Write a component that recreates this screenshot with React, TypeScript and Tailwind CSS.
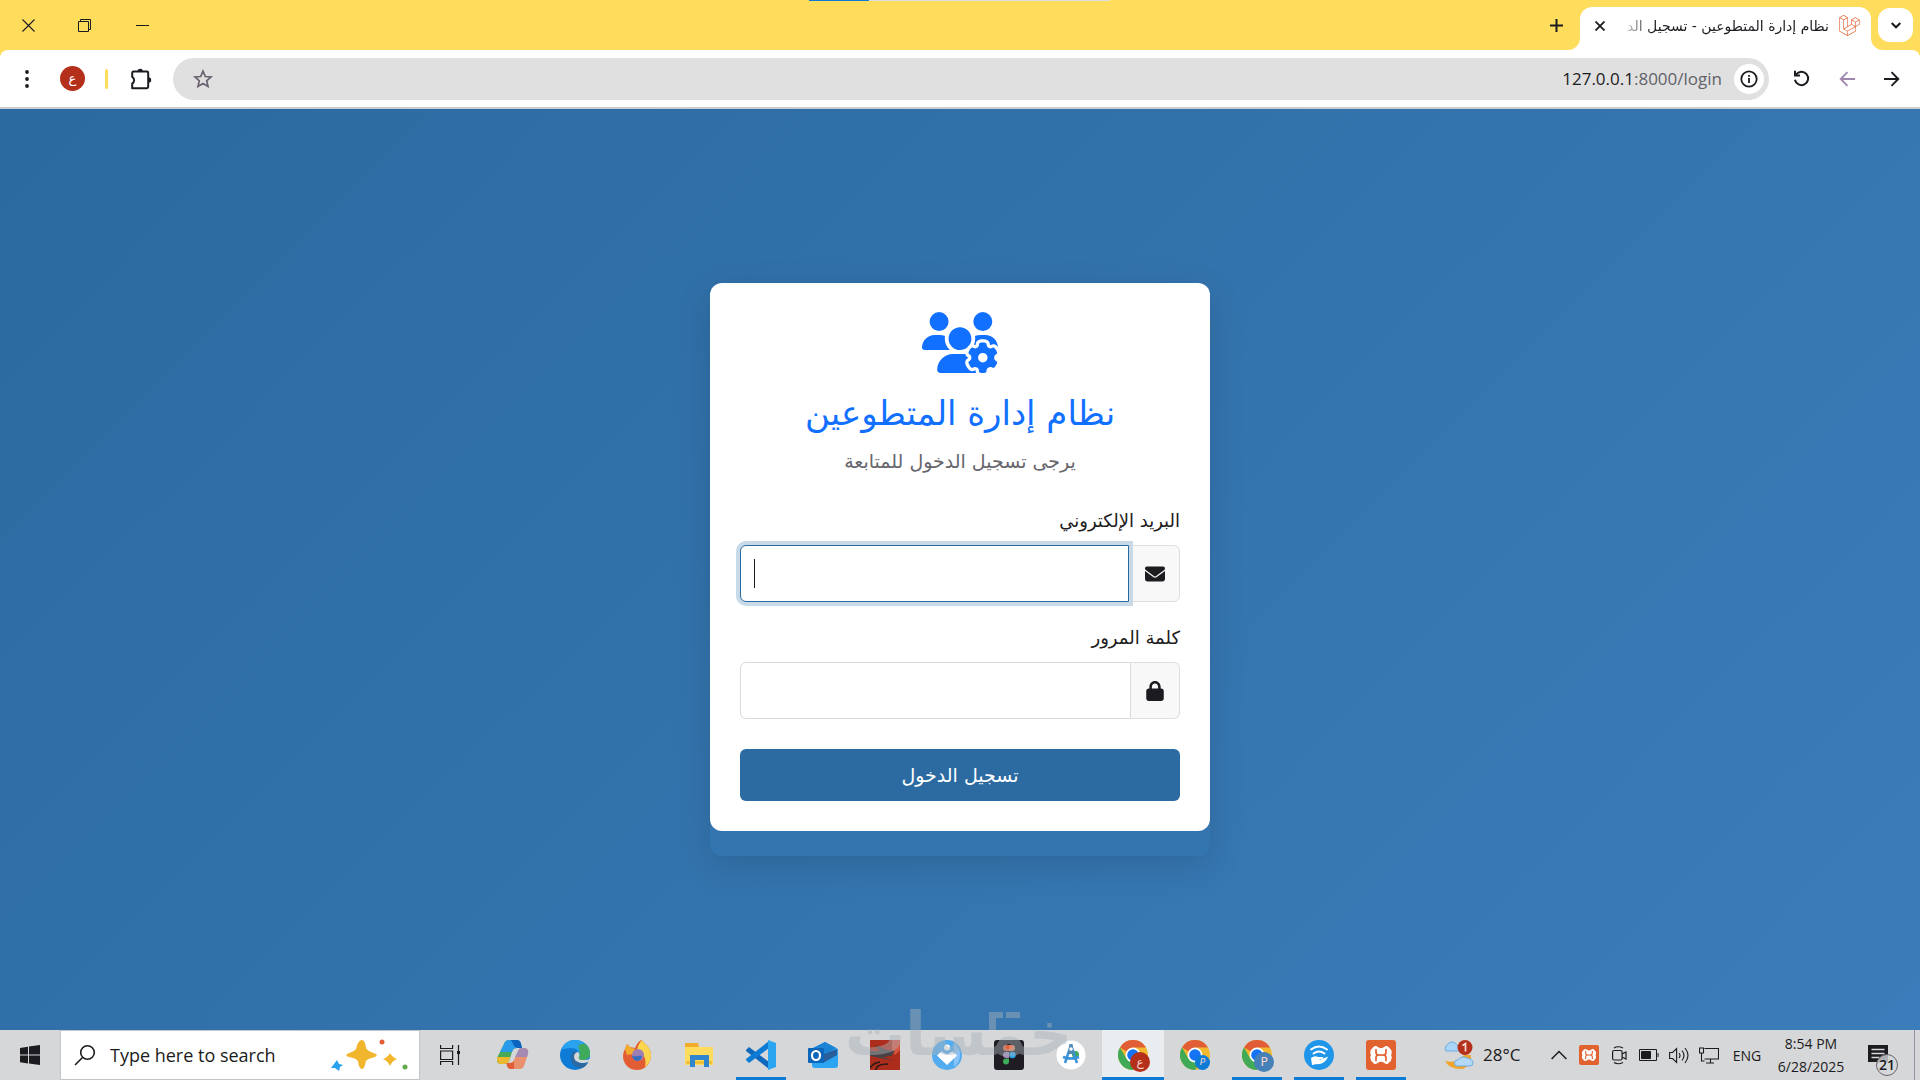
import React from "react";
import { FaUsersGear, FaEnvelope, FaLock, FaLaravel } from "react-icons/fa6";

const arabic = "font-['DejaVu_Sans',sans-serif]";

function CloseGlyph() {
  return (
    <svg width="13" height="13" viewBox="0 0 13 13" stroke="#1c1b20" strokeWidth="1.1" fill="none">
      <path d="M0.5 0.5l12 12M12.5 0.5l-12 12" />
    </svg>
  );
}
function RestoreGlyph() {
  return (
    <svg width="13" height="13" viewBox="0 0 13 13" stroke="#1c1b20" fill="none">
      <path d="M0.5 2.5h10v10h-10zM2.5 2.5v-2h10v10h-2" />
    </svg>
  );
}

function TitleBar() {
  return (
    <header className="relative flex h-[50px] items-center bg-[#ffdd5c]">
      <div className="absolute left-[809px] top-0 flex h-px w-[301px] bg-[#dedede]">
        <span className="h-px w-[60px] bg-[#0c7bd6]" />
      </div>
      <button aria-label="Close window" className="flex h-full w-14 items-center justify-center">
        <CloseGlyph />
      </button>
      <button aria-label="Restore window" className="flex h-full w-14 items-center justify-center">
        <RestoreGlyph />
      </button>
      <button aria-label="Minimize window" className="flex h-full w-15 items-center justify-center">
        <span className="h-px w-[13px] bg-[#1c1b20]" />
      </button>
      <div className="flex-1" />
      <button aria-label="New tab" className="mr-3 flex size-6 items-center justify-center">
        <svg width="13" height="13" viewBox="0 0 13 13" stroke="#1c1b20" strokeWidth="2" fill="none">
          <path d="M6.5 0v13M0 6.5h13" />
        </svg>
      </button>
      <div className="relative mr-[7px] flex h-[43px] w-[291px] items-center self-end rounded-t-xl bg-white pb-[6px] pl-[14px] pr-[11px]">
        <svg className="absolute -left-3 bottom-0" width="12" height="12" viewBox="0 0 12 12" fill="#fff">
          <path d="M12 0v12H0A12 12 0 0 0 12 0z" />
        </svg>
        <svg className="absolute -right-3 bottom-0" width="12" height="12" viewBox="0 0 12 12" fill="#fff">
          <path d="M0 0v12h12A12 12 0 0 1 0 0z" />
        </svg>
        <button aria-label="Close tab" className="flex w-[11px] items-center justify-center">
          <svg width="10" height="10" viewBox="0 0 10 10" stroke="#1c1b20" strokeWidth="1.8" fill="none">
            <path d="M0.5 0.5l9 9M9.5 0.5l-9 9" />
          </svg>
        </button>
        <div
          dir="rtl"
          className={`ml-3 mr-[10px] flex-1 whitespace-nowrap text-[14px] leading-6 text-[#1c1b20] [mask-image:linear-gradient(to_right,transparent_2px,black_36px)] ${arabic}`}
        >
          نظام إدارة المتطوعين - تسجيل الد
        </div>
        <FaLaravel className="size-[21px] text-[#e2683c]" />
      </div>
      <button aria-label="Search tabs" className="mr-[7px] flex h-[34px] w-[35px] items-center justify-center rounded-xl bg-white">
        <svg width="10" height="7" viewBox="0 0 10 7" stroke="#1c1b20" strokeWidth="2" fill="none">
          <path d="M0.7 1l4.3 4.3L9.3 1" />
        </svg>
      </button>
    </header>
  );
}

function Toolbar() {
  return (
    <div className="bg-[#ffdd5c]">
      <div className="flex h-[59px] items-center rounded-t-lg border-b-2 border-[#cbcccd] bg-white pl-[15px] pr-5">
        <button aria-label="Browser menu" className="flex w-6 justify-center">
          <svg width="4" height="18" viewBox="0 0 4 18" fill="#1c1b20">
            <circle cx="2" cy="2" r="1.9" />
            <circle cx="2" cy="9" r="1.9" />
            <circle cx="2" cy="16" r="1.9" />
          </svg>
        </button>
        <button
          aria-label="Profile"
          className={`ml-[21px] flex size-[25px] items-center justify-center rounded-full bg-[#b5301a] text-[13px] leading-none text-white ${arabic}`}
        >
          ع
        </button>
        <span className="ml-5 h-5 w-[3px] rounded-full bg-[#ffdd5c]" />
        <button aria-label="Extensions" className="ml-[22px] flex size-6 items-center">
          <svg width="22" height="22" viewBox="0 0 22 22" fill="none">
            <path d="M2.2 5a1.4 1.4 0 0 1 1.4-1.4h13.200a1.400 1.400 0 0 1 1.400 1.400v13.800a1.400 1.400 0 0 1-1.400 1.400H2.200v-4.600a4 4 0 0 0 0-6.800z" stroke="#1c1b20" strokeWidth="2" strokeLinejoin="round" />
            <path d="M7.500 3.500a2.700 2.700 0 0 1 5.400 0zM18.500 9.200a2.700 2.700 0 0 1 0 5.400z" fill="#1c1b20" />
          </svg>
        </button>
        <div className="ml-[19px] flex h-[42px] flex-1 items-center rounded-full bg-[#e0e0e0] pl-[20px] pr-[5px]">
          <button aria-label="Bookmark this tab">
            <svg width="20" height="19" viewBox="0 0 20 19" fill="none" stroke="#6b6270" strokeWidth="1.700">
              <path d="M10 2.200l2.300 5.300 5.700.5-4.300 3.800 1.300 5.600-5-3-5 3 1.300-5.600L2 8l5.700-.5z" />
            </svg>
          </button>
          <input aria-label="Address" readOnly tabIndex={-1} className="w-0 flex-1 bg-transparent" />
          <a href="#login" className="font-['Open_Sans',sans-serif] text-[17px] leading-6 text-[#5f6268]">
            <span className="text-[#1c1b20]">127.0.0.1</span>:8000/login
          </a>
          <button aria-label="Site information" className="ml-3 flex size-[30px] items-center justify-center rounded-full bg-white">
            <svg width="18" height="18" viewBox="0 0 18 18" fill="none" stroke="#1c1b20" strokeWidth="1.800">
              <circle cx="9" cy="9" r="7.700" />
              <path d="M9 8v5M9 5v1.800" />
            </svg>
          </button>
        </div>
        <button aria-label="Reload" className="ml-[24px]">
          <svg width="17" height="17" viewBox="0 0 17 17" fill="none" stroke="#1c1b20" strokeWidth="2">
            <path d="M3 4.500a6.700 6.700 0 1 1-1.100 5.300M2 .8v4.700h5" />
          </svg>
        </button>
        <button aria-label="Forward" disabled className="ml-[29px]">
          <svg width="16" height="16" viewBox="0 0 16 16" fill="none" stroke="#9f86ae" strokeWidth="1.800">
            <path d="M16 8H2M8.500 1.200L1.700 8l6.800 6.800" />
          </svg>
        </button>
        <button aria-label="Back" className="ml-[29px]">
          <svg width="16" height="16" viewBox="0 0 16 16" fill="none" stroke="#1c1b20" strokeWidth="1.900">
            <path d="M0 8h14M7.500 1.200L14.300 8l-6.800 6.800" />
          </svg>
        </button>
      </div>
    </div>
  );
}

function LoginCard() {
  return (
    <div dir="rtl" className={`w-full max-w-[500px] rounded-xl bg-[#3375ae] pb-[25px] shadow-[0_10px_35px_rgba(0,0,0,0.13)] ${arabic}`}>
      <form className="rounded-xl bg-white px-[30px] pb-[30px] pt-[29px]" onSubmit={(e) => e.preventDefault()}>
        <div className="flex flex-col items-center">
          <FaUsersGear className="h-[61px] w-[76px] text-[#1170ff]" />
          <h1 className="mt-5 text-[34px] leading-10 text-[#1170ff]">نظام إدارة المتطوعين</h1>
          <p className="mt-4 text-[19px] leading-6 text-[#66666c]">يرجى تسجيل الدخول للمتابعة</p>
        </div>
        <label htmlFor="email" className="mt-9 block text-[18px] leading-6 text-[#1c1b20]">
          البريد الإلكتروني
        </label>
        <div className="mt-3 flex h-[57px]">
          <span className="flex w-[51px] items-center justify-center rounded-r-md border border-[#dedede] bg-[#f8f8f8]">
            <FaEnvelope className="size-5 text-[#1c1b20]" />
          </span>
          <span className="relative flex flex-1">
            <input
              id="email"
              type="email"
              dir="ltr"
              className="w-full rounded-l-md border border-[#2b6ba1] bg-white px-3 text-[16px] caret-transparent shadow-[0_0_0_4px_#c8dae8] outline-none"
            />
            <span className="pointer-events-none absolute left-[14px] top-[14px] h-[29px] w-px bg-[#1c1b20]" />
          </span>
        </div>
        <label htmlFor="password" className="mt-6 block text-[18px] leading-6 text-[#1c1b20]">
          كلمة المرور
        </label>
        <div className="mt-3 flex h-[57px]">
          <span className="flex w-[49px] items-center justify-center rounded-r-md border border-l-0 border-[#dedede] bg-[#f8f8f8]">
            <FaLock className="h-5 w-[18px] text-[#1c1b20]" />
          </span>
          <input
            id="password"
            type="password"
            dir="ltr"
            className="w-0 flex-1 rounded-l-md border border-[#dadada] bg-white px-3 text-[16px] outline-none"
          />
        </div>
        <button type="submit" className="mt-[30px] block h-[52px] w-full rounded-md bg-[#2b6ba1] text-[19px] font-medium text-white">
          تسجيل الدخول
        </button>
      </form>
    </div>
  );
}

/* ---------- taskbar app icons ---------- */

function Copilot() {
  return (
    <svg width="32" height="30" viewBox="0 0 32 30">
      <path d="M8 2q1-2 5-2h7q3 0 4 4l1 4h-5q-4 0-5 4l-3 9q-1 3-5 3H4q-5 0-4-6z" fill="#46a956" />
      <path d="M8 2q1-2 5-2h7q3 0 4 4l1 4h-5q-4 0-5 4H3z" fill="#289bea" />
      <path d="M14 0h6q3 0 4 4l1 4h-5l-3-2z" fill="#0e63bd" />
      <path d="M0 17h13l-1 4q-1 3-5 3H4q-4 0-4-5z" fill="#edb82f" />
      <path d="M24 8h3q5 0 4 6l-4 12q-1 3-5 3h-8q-3 0-4-3l-1-3h3q4 0 5-3l4-8q1-4 3-4z" fill="#e9906d" />
      <path d="M24 8h3q5 0 4 6l-1 3H18l3-6q1-3 3-3z" fill="#a48bb4" />
      <path d="M10 23h3q3 0 4-2v8h-3q-3 0-4-3z" fill="#e25e36" />
    </svg>
  );
}
function Edge() {
  return (
    <svg width="30" height="30" viewBox="0 0 30 30">
      <circle cx="15" cy="15" r="15" fill="#0e7bd6" />
      <path d="M1 10C4 3 9 0 15 0c9 0 15 6 15 13 0 5-3 7-7 7-3 0-5-1-4-3 2-6-3-9-8-9-4 0-8 1-10 2z" fill="#29a3ef" />
      <path d="M18 6c3-3 8-3 10 1 4 6 2 13-5 13-3 0-5-1-4-3 1-3 1-7-1-11z" fill="#3eaa5a" />
      <path d="M12 13c-4 8 2 15 10 15 3-1 5-3 6-6-6 3-14 0-13-6 0-3 1-4 3-4-2-1-5-1-6 1z" fill="#2a6aa3" />
      <path d="M18 12c-3 0-6 5-2 9 3 2 8 3 12 1l3-1v-3c-2 2-5 2-8 2-3 0-5-1-4-3 1-3 0-4-1-5z" fill="#d6d7d8" />
    </svg>
  );
}
function Firefox() {
  return (
    <svg width="30" height="30" viewBox="0 0 30 30">
      <path d="M3 9l2-5 3 3 5 1c2-5 5-8 7-8 0 3 8 5 9 14 0 10-6 16-14 16S1 24 1 16c0-3 1-5 2-7z" fill="#e35d34" />
      <path d="M20 0c0 3 8 5 9 14 0 6-2 10-6 13 2-9-2-15-8-17 1-5 3-8 5-10z" fill="#fbd54e" />
      <path d="M3 9l2-5 3 3 5 2-2 5-6 1z" fill="#f3ac2b" />
      <circle cx="16" cy="15" r="6" fill="#9d7fb3" />
      <path d="M10 16c5 1 7-1 10 0-1 7-9 6-10 0z" fill="#376ebd" />
    </svg>
  );
}
function Explorer() {
  return (
    <svg width="30" height="26" viewBox="0 0 30 26">
      <path d="M1 2h12l2 3h14v18H1z" fill="#ffdc5c" />
      <path d="M1 1h13l1 4H1z" fill="#f2ac2c" />
      <path d="M2 19h26v3H2z" fill="#efc03a" />
      <path d="M6 13h19v12h-5v-7h-9v7H6z" fill="#2f86cf" />
    </svg>
  );
}
function VSCode() {
  return (
    <svg width="30" height="30" viewBox="0 0 30 30">
      <path d="M0 10l3-3 20 15v7L0 11z" fill="#0e68bb" />
      <path d="M0 20l3 3L23 8V1L0 19z" fill="#0c7bd6" />
      <path d="M22 0l8 3v24l-8 3z" fill="#2ba5f0" />
    </svg>
  );
}
function Outlook() {
  return (
    <svg width="32" height="28" viewBox="0 0 32 28">
      <path d="M4 8L18 1l13 7v16q0 3-3 3H8q-3 0-3-3z" fill="#2ba4f1" />
      <path d="M4 8L18 1l11 6-14 9H6z" fill="#1c82d4" />
      <path d="M15 14l15-6v6l-14 8z" fill="#285e9c" />
      <rect x="1" y="7" width="16" height="15" rx="1" fill="#0c67bb" />
      <ellipse cx="9" cy="14.500" rx="4" ry="4.500" fill="none" stroke="#fff" strokeWidth="2.200" />
    </svg>
  );
}
function RedApp() {
  return (
    <svg width="30" height="30" viewBox="0 0 30 30">
      <path fill="#ac2d1b" d="M0 0h30v30H0z" />
      <path d="M22 0h8v10l-5 5-3-3z" fill="#d8543d" />
      <path d="M0 11l10 0-5-6 12 5 8 1-4 5-8 1 11 4-14-3-10-2z" fill="#494144" />
      <path d="M0 28q3-5 10-6M6 30q0-6 12-6" stroke="#291917" fill="none" strokeWidth="1.500" />
    </svg>
  );
}
function DriverApp() {
  return (
    <svg width="30" height="30" viewBox="0 0 30 30">
      <circle cx="15" cy="15" r="15" fill="#53acef" />
      <path d="M22 3a15 15 0 0 1 0 24z" fill="#8ac4fb" />
      <circle cx="15" cy="7.500" r="3" fill="#fff" />
      <path d="M15 24.500l-9.500-9 4-3.500 5.500 3 5.500-3 4 3.500z" fill="#fff" stroke="#fff" strokeLinejoin="round" />
    </svg>
  );
}
function Figma() {
  return (
    <svg width="30" height="30" viewBox="0 0 30 30">
      <rect width="30" height="30" rx="3" fill="#1f1d23" />
      <path d="M12 5h3v6h-3a3 3 0 0 1 0-6z" fill="#e25e36" />
      <path d="M15 5h3a3 3 0 0 1 0 6h-3z" fill="#e9805f" />
      <path d="M12 12h3v6h-3a3 3 0 0 1 0-6z" fill="#a487bb" />
      <circle cx="18.500" cy="15" r="3.200" fill="#29a3ef" />
      <path d="M12 18.500h3v3a3 3 0 1 1-3-3z" fill="#3eaa5a" />
    </svg>
  );
}
function StudioApp() {
  return (
    <svg width="30" height="30" viewBox="0 0 30 30">
      <circle cx="15" cy="15" r="14.500" fill="#fff" />
      <circle cx="19.500" cy="14.500" r="3.500" fill="#3eaa5a" />
      <path d="M15 5l-6 18M15 5l6 18M7 17q8 3 16 0" stroke="#3992d8" strokeWidth="2.500" fill="none" />
      <path d="M13.500 4h3l1.500 10h-6z" fill="#5189b5" />
      <circle cx="15" cy="9" r="1.800" fill="#fff" />
    </svg>
  );
}
function ChromeIcon({ badge, color, big }: { badge: string; color: string; big?: boolean }) {
  return (
    <span className="relative size-[30px]">
      <svg width="30" height="30" viewBox="0 0 30 30">
        <circle cx="15" cy="15" r="15" fill="#f2b82f" />
        <path d="M15 15L2 7.500A15 15 0 0 1 28 7.500H15z" fill="#e15d36" />
        <path d="M2 7.500A15 15 0 0 0 15 30l6.500-11.500L15 15 8.500 18.700z" fill="#40aa56" />
        <circle cx="15" cy="15" r="7.500" fill="#fff" />
        <circle cx="15" cy="15" r="5.800" fill="#1673f5" />
      </svg>
      <span
        className={`absolute flex items-center justify-center rounded-full leading-none text-[#f3d5cf] ${arabic} ${color} ${
          big ? "left-3 top-3 size-5 text-[12px]" : "left-[15px] top-[15px] size-[15px] text-[9px] italic"
        }`}
      >
        {badge}
      </span>
    </span>
  );
}
function ShareApp() {
  return (
    <svg width="30" height="30" viewBox="0 0 30 30">
      <circle cx="15" cy="15" r="15" fill="#2096ea" />
      <path d="M7 9.500q8-6 16 0M9.500 13.500q5.500-4 11 0" stroke="#fff" strokeWidth="2" fill="none" strokeLinecap="round" />
      <path d="M7 18q4-3 7-1h5q1 1.500-1 2h-4l3 .5 7-3q-2 6-8 7.500-5 0-8 1z" fill="#fff" />
    </svg>
  );
}
function Xampp({ small }: { small?: boolean }) {
  return (
    <svg className={small ? "size-5" : "size-[30px]"} viewBox="0 0 30 30">
      <rect width="30" height="30" rx="3" fill="#e2622f" />
      <path d="M9.500 9.500q5.500 4 11 0M9.500 20.500q5.500-4 11 0M9.500 9.500q-4 3 0 5.500-4 2.500 0 5.500M20.500 9.500q4 3 0 5.500 4 2.500 0 5.500" stroke="#fff" strokeWidth="6.500" fill="none" strokeLinecap="round" strokeLinejoin="round" />
      <path d="M10 9.500v3q0 2.500 3 2.500h4q3 0 3-2.500v-3M10 20.500v-3q0-2.500 3-2.500h4q3 0 3 2.500v3" stroke="#e2622f" strokeWidth="1.700" fill="none" strokeLinecap="round" />
    </svg>
  );
}

type App = { name: string; icon: React.ReactNode; state?: "open" | "active" };
const apps: App[] = [
  { name: "Copilot", icon: <Copilot /> },
  { name: "Microsoft Edge", icon: <Edge /> },
  { name: "Firefox", icon: <Firefox /> },
  { name: "File Explorer", icon: <Explorer /> },
  { name: "Visual Studio Code", icon: <VSCode />, state: "open" },
  { name: "Outlook", icon: <Outlook /> },
  { name: "Game", icon: <RedApp /> },
  { name: "Driver Booster", icon: <DriverApp /> },
  { name: "Figma", icon: <Figma /> },
  { name: "Android Studio", icon: <StudioApp /> },
  { name: "Chrome profile 1", icon: <ChromeIcon badge="ع" color="bg-[#b5301a]" big />, state: "active" },
  { name: "Chrome profile 2", icon: <ChromeIcon badge="P" color="bg-[#0c7bd6]" /> },
  { name: "Chrome profile 3", icon: <ChromeIcon badge="P" color="bg-[#4580b8]" big />, state: "open" },
  { name: "Share", icon: <ShareApp />, state: "open" },
  { name: "XAMPP", icon: <Xampp />, state: "open" },
];

function Weather() {
  return (
    <svg width="32" height="30" viewBox="0 0 32 30">
      <path d="M22 15h7v9l-8 5q-13 1-18-8 8 2 14-1z" fill="#f2a52c" />
      <path d="M4 11a4 4 0 0 1 0-5q4-6 9-3 3 2 3 4 3 0 3 4z" fill="#a9d4f7" stroke="#6caee4" />
      <path d="M15 26a3 3 0 0 1 1-6q4-5 9-2 6 1 6 5 0 3-3 3z" fill="#b3d8f7" stroke="#6caee4" />
      <circle cx="23" cy="7.500" r="7.500" fill="#b5301a" />
      <path d="M20.500 5.500l3-2v8" stroke="#f6dcd8" strokeWidth="1.700" fill="none" />
    </svg>
  );
}

function Watermark() {
  return (
    <span aria-hidden="true" dir="rtl" className="pointer-events-none absolute -top-[36px] left-[845px] opacity-45">
      <span className={`block whitespace-nowrap text-[60px] font-bold leading-[80px] text-[#a9b2b8] ${arabic}`}>خمسات</span>
      <svg className="absolute left-[144px] top-[18px]" width="32" height="18" viewBox="0 0 32 18" fill="#a9b2b8">
        <path d="M0 0h14v6H7v12H0zM17 0h14v6H17z" />
      </svg>
    </span>
  );
}

function Taskbar() {
  return (
    <footer className="relative flex h-[50px] items-stretch bg-[#d5d7d9] font-['Open_Sans',sans-serif] text-[#1c1b20]">
      <button aria-label="Start" className="flex w-[60px] items-center pl-5">
        <svg width="20" height="20" viewBox="0 0 20 20" fill="#1c1b20">
          <path d="M0 3l8-1.200v7.700H0zM9 1.600L20 0v9.500H9zM0 10.500h8v7.900L0 17.200zM9 10.500h11V20L9 18.500z" />
        </svg>
      </button>
      <div className="flex w-[360px] items-center border border-[#c3c5c8] bg-white pl-[13px] pr-[10px]">
        <svg width="22" height="22" viewBox="0 0 22 22" fill="none" stroke="#1c1b20" strokeWidth="1.600">
          <circle cx="13.500" cy="8.500" r="6.800" />
          <path d="M8.500 13.500L1 21" />
        </svg>
        <input
          aria-label="Search"
          placeholder="Type here to search"
          className="ml-[14px] w-0 flex-1 bg-transparent text-[18px] text-[#1c1b20] outline-none placeholder:text-[#1c1b20]"
        />
        <svg width="78" height="32" viewBox="0 0 78 32">
          <path d="M31 1q3 0 4 8 1 3 10 6 2 1-1 3-8 2-9 4-2 9-4 8-3 0-4-8-2-3-9-4-4-1-2-3 8-3 9-5 2-9 6-9z" fill="#f1b62d" />
          <path d="M59 14q2 4 7 6-5 2-7 7-2-5-7-7 5-2 7-6z" fill="#f1b62d" />
          <path d="M6 21l2 4 4 1-3 2-1 4-4-3-4 0 3-4z" fill="#29a3ef" />
          <circle cx="51" cy="3" r="2.500" fill="#e25e36" />
          <circle cx="74" cy="28" r="2.500" fill="#62a94c" />
        </svg>
      </div>
      <button aria-label="Task view" className="flex w-[62px] items-center pl-5">
        <svg width="20" height="20" viewBox="0 0 20 20" fill="none" stroke="#1c1b20" strokeWidth="1.200">
          <path d="M.6 0v3.500h12V0M.6 6h12v8.500H.6zM.6 20v-3.500h12V20M18.500 0v20" />
          <path d="M17 6h3v3h-3z" fill="#1c1b20" stroke="none" />
        </svg>
      </button>
      <nav className="flex">
        {apps.map((a) => (
          <button
            key={a.name}
            aria-label={a.name}
            className={`relative flex w-[62px] items-center justify-center ${a.state === "active" ? "bg-[#e9edf0]" : ""}`}
          >
            {a.icon}
            {a.state && (
              <span className={`absolute bottom-0 h-[3px] bg-[#0c7bd6] ${a.state === "active" ? "inset-x-0" : "inset-x-[6px]"}`} />
            )}
          </button>
        ))}
      </nav>
      <div className="flex-1" />
      <button className="flex items-center gap-[9px] text-[17px]">
        <Weather />
        <span className="w-[40px] whitespace-nowrap text-left">28°C</span>
      </button>
      <div className="ml-[28px] flex items-center">
        <button aria-label="Show hidden icons">
          <svg width="16" height="10" viewBox="0 0 16 10" fill="none" stroke="#1c1b20" strokeWidth="1.500">
            <path d="M.6 9L8 1.500 15.400 9" />
          </svg>
        </button>
        <button aria-label="XAMPP control" className="ml-3">
          <Xampp small />
        </button>
        <button aria-label="Meet now" className="ml-[13px]">
          <svg width="15" height="19" viewBox="0 0 15 19" fill="none" stroke="#1c1b20" strokeWidth="1.200">
            <rect x=".6" y="4.500" width="9.500" height="9.500" rx="1.500" />
            <path d="M10 8l4-2v7l-4-2M2 2q4-2.500 9 0M2 16.500q4 2.500 9 0" />
          </svg>
        </button>
        <button aria-label="Battery" className="ml-3">
          <svg width="20" height="12" viewBox="0 0 20 12" fill="none" stroke="#1c1b20">
            <path d="M.5.5h17v11H.5zM19 4v4" />
            <path d="M2.500 2.500h9v7h-9z" fill="#1c1b20" />
          </svg>
        </button>
        <button aria-label="Volume" className="ml-[10px]">
          <svg width="21" height="17" viewBox="0 0 21 17" fill="none" stroke="#1c1b20" strokeWidth="1.100">
            <path d="M.6 5.500h3l4-4v14l-4-4h-3zM10 6q2 2.500 0 5M13 3.500q4 5 0 10M16 1q6 7.500 0 15" />
          </svg>
        </button>
        <button aria-label="Network" className="ml-[9px]">
          <svg width="20" height="17" viewBox="0 0 20 17" fill="none" stroke="#1c1b20" strokeWidth="1.100">
            <path d="M5.500 1.500h14v10.500h-14M11.500 12v4M7 16h8M.5 1h4v5h-4zM2.500 6v8h3" />
          </svg>
        </button>
        <button aria-label="Input language" className="ml-[13px] w-[30px] text-[14px]">ENG</button>
      </div>
      <div className="ml-3 flex w-[74px] flex-col items-center justify-center whitespace-nowrap text-[14px] leading-[23px]">
        <span>8:54 PM</span>
        <span>6/28/2025</span>
      </div>
      <button aria-label="Notifications, 21 new" className="relative ml-5 w-[46px]">
        <svg className="mt-[-2px]" width="20" height="19" viewBox="0 0 20 19">
          <path d="M0 0h20v17h-8l-3 2v-2H0z" fill="#1c1b20" />
          <path d="M3.500 4.500h13M3.500 8.500h13M3.500 12.500h8" stroke="#d8d8d8" strokeWidth="1.400" />
        </svg>
        <span className="absolute left-2 top-[24px] flex size-[22px] items-center justify-center rounded-full border border-[#6b6270] bg-[#d5d7d9]/80 text-[14px] font-semibold leading-none">
          21
        </span>
      </button>
      <span className="mr-[5px] w-px bg-[#9b8ca5]" />
      <Watermark />
    </footer>
  );
}

export default function App() {
  return (
    <div className="flex min-h-screen flex-col">
      <TitleBar />
      <Toolbar />
      <main className="flex flex-1 items-center justify-center bg-[linear-gradient(135deg,#2b6aa0,#3b7dba)]">
        <LoginCard />
      </main>
      <Taskbar />
    </div>
  );
}
